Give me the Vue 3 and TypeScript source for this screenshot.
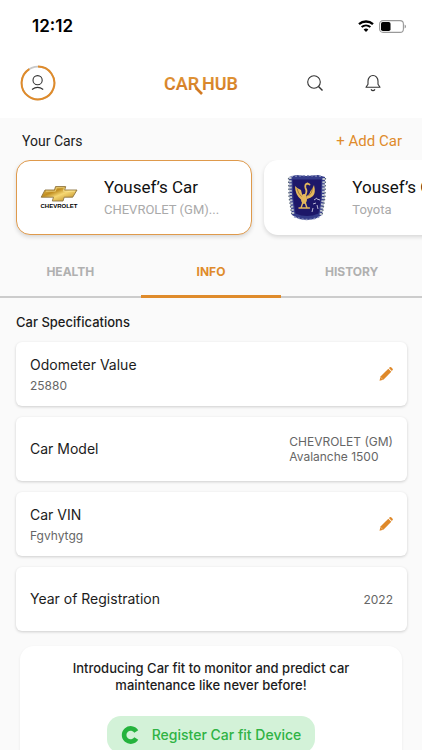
<script setup lang="ts">
import { ref } from 'vue'

interface Car { id: number; name: string; make: string; logo: 'chevrolet' | 'crest' }
interface Spec { label: string; sub?: string; value?: string[]; editable?: boolean }

const cars: Car[] = [
  { id: 1, name: 'Yousef’s Car', make: 'CHEVROLET (GM)...', logo: 'chevrolet' },
  { id: 2, name: 'Yousef’s Car', make: 'Toyota', logo: 'crest' },
]
const specs: Spec[] = [
  { label: 'Odometer Value', sub: '25880', editable: true },
  { label: 'Car Model', value: ['CHEVROLET (GM)', 'Avalanche 1500'] },
  { label: 'Car VIN', sub: 'Fgvhytgg', editable: true },
  { label: 'Year of Registration', value: ['2022'] },
]
const tabs = ['HEALTH', 'INFO', 'HISTORY']
const activeTab = ref('INFO')
const activeCar = ref(1)
</script>

<template>
  <div class="app">
    <header class="top">
      <div class="status">
        <span class="time">12:12</span>
        <div class="indicators">
          <svg width="16" height="12" viewBox="0 0 16 12" aria-hidden="true">
            <path d="M1 4.2a10.4 10.4 0 0 1 14 0" fill="none" stroke="#000" stroke-width="2.3" />
            <path d="M3.6 7.1a6.6 6.6 0 0 1 8.8 0" fill="none" stroke="#000" stroke-width="2" />
            <path d="M8 12 5.6 9.5a3.6 3.6 0 0 1 4.8 0z" />
          </svg>
          <svg width="27" height="13" viewBox="0 0 27 13" aria-hidden="true">
            <rect x=".6" y=".6" width="23.8" height="11.8" rx="3.4" fill="#fff" stroke="#999" stroke-width="1.1" />
            <rect x="2" y="2" width="9.5" height="9" rx="1.8" />
            <path d="M25.6 4.5v4q1.4-.6 1.4-2t-1.4-2z" fill="#999" />
          </svg>
        </div>
      </div>
      <div class="bar">
        <button class="avatar" aria-label="Profile">
          <svg width="36" height="36" viewBox="0 0 36 36">
            <circle cx="18" cy="18" r="16.4" fill="none" stroke="#c8c8c8" stroke-width="1.6" />
            <path d="M18 1.6A16.4 16.4 0 1 1 9.3 4.1" fill="none" stroke="#df8b2b" stroke-width="2" />
            <circle cx="17.6" cy="15.2" r="4.6" fill="none" stroke="#333" stroke-width="1.1" />
            <path d="M12 24.5q5.6-4.3 11.2 0" fill="none" stroke="#333" stroke-width="1.1" />
          </svg>
        </button>
        <svg class="brand" width="76" height="26" viewBox="0 0 76 26" role="img" aria-label="CAR HUB">
          <defs>
            <linearGradient id="brandFill" x1="0" y1="0" x2="0" y2="1">
              <stop offset="0" stop-color="#e39a3a" /><stop offset="1" stop-color="#cf7420" />
            </linearGradient>
          </defs>
          <text x="1" y="20" class="brand-text" fill="url(#brandFill)">CAR</text>
          <path d="m33 18 6 6" fill="none" stroke="#d27a23" stroke-width="2.6" />
          <text x="75" y="20" text-anchor="end" class="brand-text" fill="url(#brandFill)">HUB</text>
        </svg>
        <div class="actions">
          <button aria-label="Search">
            <svg width="18" height="18" viewBox="0 0 18 18" fill="none" stroke="#333" stroke-width="1.1">
              <circle cx="8" cy="8" r="6.3" /><path d="m12.5 12.5 4 4" stroke-width="1.4" />
            </svg>
          </button>
          <button aria-label="Notifications">
            <svg width="18" height="18" viewBox="0 0 18 18" fill="none" stroke="#333" stroke-width="1.1" stroke-linejoin="round">
              <path d="M2 13.3h14L14 10.2V7.3C14 3.6 11.8 1.5 9 1.5S4 3.6 4 7.3v2.9z" />
              <path d="M7 15.3q2 2.6 4 0" stroke-width="1.3" />
            </svg>
          </button>
        </div>
      </div>
    </header>

    <main class="content">
      <div class="cars-head">
        <h2>Your Cars</h2>
        <button class="add">+ Add Car</button>
      </div>
      <div class="cars">
        <button v-for="car in cars" :key="car.id" class="car" :class="{ selected: car.id === activeCar }" @click="activeCar = car.id">
          <span class="car-logo">
            <svg v-if="car.logo === 'chevrolet'" width="40" height="24" viewBox="0 0 40 24" aria-hidden="true">
              <defs>
                <linearGradient id="gold" x1="0" y1="0" x2="1" y2="1">
                  <stop offset="0" stop-color="#f3d169" /><stop offset=".35" stop-color="#c08d20" />
                  <stop offset=".55" stop-color="#f6d873" /><stop offset="1" stop-color="#b27b13" />
                </linearGradient>
              </defs>
              <path d="M6 4h9.5l1-3.4h10.2L25.7 4H38l-4.3 7.2h-8.5L24 15H13.3l1.2-3.8H2.2z" fill="url(#gold)" stroke="#8d7441" stroke-width=".9" />
              <path d="M7 5.2h9.4l1-3.5h8L24.4 5.2H36" fill="none" stroke="#fff0a8" stroke-width=".6" />
              <text x="20" y="21.5" text-anchor="middle" class="chevy">CHEVROLET</text>
            </svg>
            <svg v-else width="40" height="48" viewBox="0 0 40 48" aria-hidden="true">
              <path d="M2 3 9 1l11 1 11-1 7 2-.5 20L35 41l-7 4-8 1-8-1-7-4-2.5-18z" fill="#353c8a" />
              <path d="M3 3 3.5 23 6 41M34 41l2.5-18L37 3" fill="none" stroke="#c1c7d0" stroke-width="3" stroke-dasharray="2 1.2" />
              <path d="M1.5 4 2 23l3 19M38.5 4 38 23l-3 19" fill="none" stroke="#59687a" stroke-width="1.2" stroke-dasharray="1.5 2" />
              <path d="M4 2.6q16-2 32 0M7 42.5q13 6 26 0" fill="none" stroke="#8b94bd" stroke-width="1.4" stroke-dasharray="2 2" />
              <path d="M5.5 5.5h29l-1 20.5-2 13.5q-11.5 5-23 0L6.500 26z" fill="#1d1769" />
              <g fill="#e4b85d">
                <path d="M8 12q2 2.5 6 4l1.5 6-1 4Q8 21 8 12z" />
                <path d="M27 11q2 8-1 11-2 2-6 3l-.5-3q3-1 4-5 2-2 3.5-6z" />
                <ellipse cx="17" cy="25" rx="3" ry="5" />
              </g>
              <g fill="none" stroke="#e4b85d" stroke-linecap="round">
                <path d="M17 23q4-5 1.5-9-1-4 2-4.5l2 1" stroke-width="1.8" />
                <path d="M16 28l-2 6h-2m6-6 2 6h2.5M14 34h7" stroke-width="1.4" />
              </g>
              <path d="M10 14.5q1 5 4.5 8M25.5 14q0 5-4 8" fill="none" stroke="#8b6229" stroke-width=".7" />
              <path d="m27 26 3-2m-4 6 3-1m1 2 1 4m-5-1-1 4m5-13 3 1" stroke="#bdbbd5" stroke-width="1" />
            </svg>
          </span>
          <span class="car-text">
            <span class="car-name">{{ car.name }}</span>
            <span class="car-make">{{ car.make }}</span>
          </span>
        </button>
      </div>

      <div class="tabs" role="tablist">
        <button v-for="tab in tabs" :key="tab" role="tab" :aria-selected="tab === activeTab" :class="{ active: tab === activeTab }" @click="activeTab = tab">{{ tab }}</button>
      </div>

      <section class="specs">
        <h2>Car Specifications</h2>
        <div v-for="spec in specs" :key="spec.label" class="row">
          <div class="row-main">
            <span class="label">{{ spec.label }}</span>
            <span v-if="spec.sub" class="detail">{{ spec.sub }}</span>
          </div>
          <button v-if="spec.editable" class="edit" :aria-label="'Edit ' + spec.label">
            <svg width="14" height="14" viewBox="0 0 14 14" fill="#df8929">
              <path d="m9.3 1.7 3 3-7.900 8-3.900 1 1-4.100z" />
              <path d="m9.900 1.100.9-.8q.7-.6 1.400 0l1.400 1.400q.6.7 0 1.400l-.8.9z" />
              <path d="m1.500 10.200 2.500 2.500" stroke="#fff" stroke-width=".4" />
            </svg>
          </button>
          <div v-else class="value">
            <span v-for="line in spec.value" :key="line" class="detail">{{ line }}</span>
          </div>
        </div>
      </section>

      <section class="promo">
        <p>Introducing Car fit to monitor and predict car<br>maintenance like never before!</p>
        <button class="register">
          <svg width="18" height="20" viewBox="0 0 18 20" aria-hidden="true">
            <path d="M15.3 6.5A6.6 6.6 0 1 0 15.3 13.5" fill="none" stroke="#25b33d" stroke-width="4.6" />
          </svg>
          Register Car fit Device
        </button>
      </section>
    </main>
  </div>
</template>

<style>
body { margin: 0; background: #fafafa; }
</style>

<style scoped>
.app {
  height: 100vh;
  display: flex;
  flex-direction: column;
  overflow: hidden;
  background: #fafafa;
  color: #1c1c1c;
  font-family: Inter, Roboto, sans-serif;
}
button { margin: 0; padding: 0; border: 0; background: none; color: inherit; font: inherit; cursor: pointer; }
svg { display: block; }
h2, p { margin: 0; }
.top { flex: none; background: #fff; padding-bottom: 17px; }
.status { display: flex; justify-content: space-between; align-items: center; height: 52px; padding: 0 16px 0 32px; }
.time { font-size: 17px; font-weight: 600; color: #000; }
.indicators { display: flex; align-items: center; gap: 5px; }
.bar { display: grid; grid-template-columns: 1fr auto 1fr; align-items: center; height: 36px; padding: 13px 20px 0; }
.avatar { justify-self: start; }
.brand { margin-right: 20px; }
.brand-text { font: 600 18px Roboto, sans-serif; }
.actions { display: flex; justify-content: flex-end; gap: 40px; padding-right: 20px; }

.content { flex: 1; overflow: auto; scrollbar-width: none; }
.cars-head { display: flex; justify-content: space-between; align-items: center; height: 42px; padding: 4px 20px 0 22px; box-sizing: border-box; font-family: Roboto, sans-serif; }
.cars-head h2 { font-size: 14px; font-weight: 400; }
.add { color: #df8b2b; font-size: 15px; }
.cars { display: flex; gap: 12px; padding: 0 16px 12px; overflow: hidden; }
.car {
  flex: none;
  display: flex;
  align-items: center;
  gap: 25px;
  width: 56vw;
  height: 75px;
  box-sizing: border-box;
  padding: 0 22px;
  border: 1px solid transparent;
  border-radius: 14px;
  background: #fff;
  box-shadow: 0 2px 4px rgba(0, 0, 0, .14);
  text-align: left;
  font-family: Roboto, sans-serif;
}
.car.selected { border-color: #df9a4c; }
.chevy { font: 700 6px "Liberation Sans", sans-serif; }
.car-text { display: flex; flex-direction: column; gap: 4px; white-space: nowrap; }
.car-name { font-size: 17px; line-height: 20px; color: #111; }
.car-make { font-size: 13px; line-height: 18px; color: #aaa; }

.tabs { display: grid; grid-template-columns: repeat(3, 1fr); height: 51px; box-shadow: inset 0 -2px #ccc; }
.tabs button { border-bottom: 3px solid transparent; color: #b0b0b0; font-size: 12px; font-weight: 700; }
.tabs .active { color: #df8b2b; border-color: #df8b2b; }

.specs { display: flex; flex-direction: column; gap: 11px; padding: 15px 15px 15px 16px; }
.specs h2 { font-size: 13px; line-height: 18px; font-weight: 500; }
.row {
  display: flex;
  justify-content: space-between;
  align-items: center;
  min-height: 64px;
  box-sizing: border-box;
  padding: 0 14px;
  border-radius: 6px;
  background: #fff;
  box-shadow: 0 1px 3px rgba(0, 0, 0, .18);
}
.row-main, .value { display: flex; flex-direction: column; }
.row-main { gap: 3px; }
.label { font-size: 14px; line-height: 20px; }
.detail { color: #666; font-size: 12px; line-height: 15px; }

.promo {
  display: flex;
  flex-direction: column;
  align-items: center;
  gap: 22px;
  margin: 0 20px;
  padding: 14px 16px 28px;
  border-radius: 14px;
  background: #fff;
  box-shadow: 0 1px 3px rgba(0, 0, 0, .07);
}
.promo p { text-align: center; font-size: 13px; line-height: 17px; font-weight: 500; }
.register { display: flex; align-items: center; gap: 13px; height: 37px; padding: 0 14px; border-radius: 14px; background: #d3f2d8; color: #2fb344; font-size: 14px; font-weight: 500; }
</style>
